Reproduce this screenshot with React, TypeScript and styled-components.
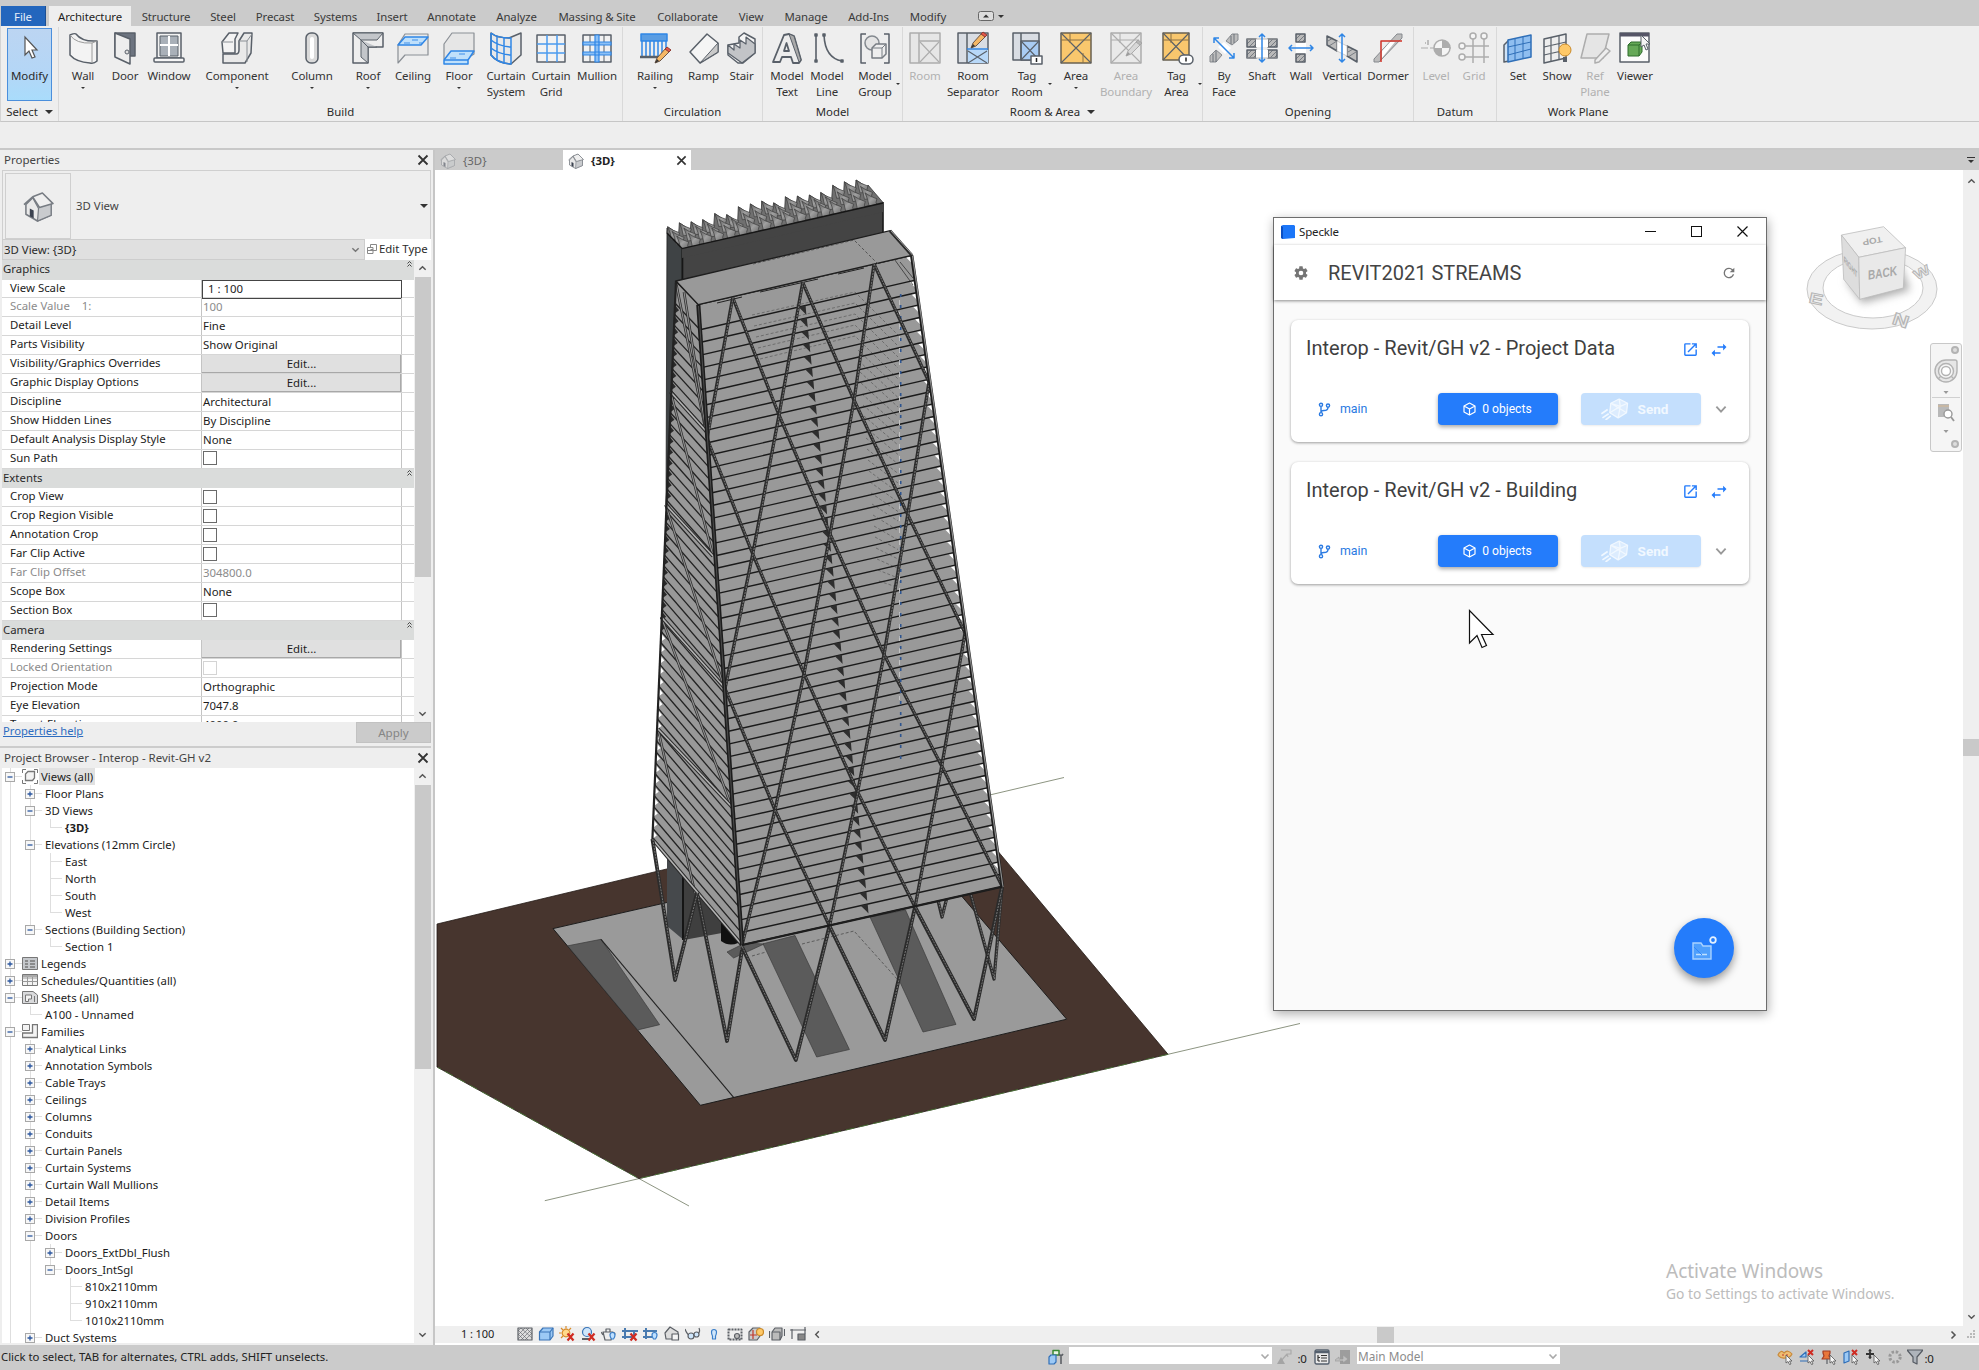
import React from 'react';
import styled, { createGlobalStyle } from 'styled-components';

const UI = '"Noto Sans", "Open Sans", sans-serif';
const G = '#596069';
const B = '#2f86e6';

const GlobalStyle = createGlobalStyle`
  * { box-sizing: border-box; }
  body { margin: 0; background: #fff; }
`;

const Page = styled.div`
  width: 1979px; height: 1370px; overflow: hidden;
  display: flex; flex-direction: column;
  background: #eeeeee; color: #2b2b2b;
  font: 11.4px/16px ${UI}; white-space: nowrap;
`;

/* ---------- ribbon ---------- */
const TabBar = styled.nav`
  height: 26px; flex: none; padding-top: 6px; background: #cbcbcb;
  display: flex; align-items: stretch;
`;
const Tab = styled.div<{ $w: number; $kind?: 'file' | 'active' }>`
  width: ${p => p.$w}px; display: flex; align-items: center; justify-content: center;
  font-size: 11.4px; letter-spacing: -0.1px; padding-top: 2px; color: #3a3a3a;
  ${p => p.$kind === 'file' && 'background:#2366bd;color:#e6effa;margin:0 3px 0 1px;border-right:1px solid #1c4f93;'}
  ${p => p.$kind === 'active' && 'background:#eeeeee;color:#1e1e1e;margin-right:1px;'}
`;
const TabMenu = styled.div`
  display: flex; align-items: center; gap: 4px; margin-left: 21px;
`;
const RibbonBar = styled.div`
  height: 96px; flex: none; display: flex; padding-top: 1px;
  border-bottom: 1px solid #c6c6c6; border-left: 1px solid #d4d4d4;
`;
const Panel = styled.section<{ $w: number; $last?: boolean }>`
  width: ${p => p.$w}px; display: flex; flex-direction: column;
  ${p => !p.$last && 'border-right: 1px solid #d9d9d9;'}
`;
const PanelBody = styled.div`display: flex; height: 76px;`;
const PanelTitle = styled.div`
  height: 18px; display: flex; align-items: center; justify-content: center; gap: 7px;
  font-size: 11.4px;
`;
const Tool = styled.button<{ $ml: number; $dim?: boolean }>`
  width: 36px; margin: 0 0 0 ${p => p.$ml}px; padding: 4px 0 0; border: 0; background: none;
  display: flex; flex-direction: column; align-items: center; flex: none;
  font: 11.5px/16px ${UI}; letter-spacing: -0.1px; color: ${p => (p.$dim ? '#b1b1b1' : '#333')};
  svg.tool { flex: none; margin-bottom: 3px; opacity: ${p => (p.$dim ? 0.45 : 1)}; ${p => p.$dim && 'filter: grayscale(1);'} }
`;
const ToolLabel = styled.span`text-align: center; white-space: pre;`;
const CaretRow = styled.span<{ $side?: boolean }>`
  display: flex; height: 8px; align-items: center;
  ${p => p.$side && 'margin: -20px -42px 0 0; padding-left: 4px;'}
`;
const ModifyButton = styled.button`
  width: 45px; height: 73px; margin: 1px 0 0 6px; padding: 5px 0 0; border: 1px solid #4b8fdc;
  background: linear-gradient(#bcd5f2, #b4d6f6 60%, #a9dcfb);
  display: flex; flex-direction: column; align-items: center; gap: 4px; font: 11.5px/16px ${UI}; color: #2b2b2b;
`;
const OptionsBar = styled.div`height: 28px; flex: none; border-bottom: 2px solid #c8c8c8;`;

const Tri = styled.i<{ $s?: number; $c?: string }>`
  width: 0; height: 0; border: ${p => p.$s ?? 3}px solid transparent; border-bottom: 0;
  border-top-color: ${p => p.$c ?? '#333'}; display: block;
`;

const S = ({ children }: { children: React.ReactNode }) => (
  <svg className="tool" width="34" height="34" viewBox="0 0 34 34" fill="none" stroke={G} strokeWidth="1.5" strokeLinejoin="round">{children}</svg>
);
const pencil = (x: number, y: number) => (
  <g transform={`translate(${x} ${y})`} strokeWidth="1">
    <path d="M0 15 L2 10 L11 0 L15 3 L5 13 Z" fill="#f5b765" stroke="#6a5547" />
    <path d="M10 1 L14 4 L16 2 L12 -1 Z" fill="#e3574a" stroke="#8f3b33" />
    <path d="M0 15 L2 11 L4 13 Z" fill="#333" stroke="none" />
  </g>
);
const cross = (x: number, y: number, w: number, h: number) => (
  <path strokeWidth="1.1" d={`M${x} ${y}L${x + w} ${y + h}M${x + w} ${y}L${x} ${y + h}`} />
);
const hatch = (x: number, y: number) => (
  <g><rect x={x} y={y} width="9" height="8" fill="#b9b9b9" /><path strokeWidth=".7" d={`M${x} ${y + 5}l5-5M${x + 2} ${y + 8}l7-7M${x + 6} ${y + 8}l3-3`} /></g>
);

const ICONS: Record<string, React.ReactNode> = {
  wall: <S><path fill="#f3f3f3" d="M4 4 Q9 2 10 3 Q16 11 31 10 L31 30 Q28 33 24 32 Q10 31 4 24 Z" /><path d="M4 4Q10 13 26 12 L31 10M26 12V32" strokeWidth="1" stroke="#9a9a9a" /></S>,
  door: <S><path fill="#6d7480" d="M7 2H27V25H7Z" /><path fill="#eee" d="M7 2 L22 8 V33 L7 26 Z" /><circle cx="19" cy="21" r="2" fill="#ddd" strokeWidth="1" /></S>,
  window: <S><rect x="5" y="2" width="24" height="25" fill="#f2f2f2" /><rect x="8" y="5" width="18" height="20" fill="#a9b0b8" strokeWidth="1" /><path d="M17 5V25M8 14H26" stroke="#fff" strokeWidth="2" /><rect x="2" y="27" width="30" height="4" rx="1" fill="#f6f6f6" /></S>,
  component: <S><path fill="#f3f3f3" d="M2 11 L9 2 H18 L15 8 V22 H3 Z" /><path fill="#e9e9e9" d="M19 10 L24 2 H32 L31 22 L25 32 H3 V23 H16 Q19 23 19 19 Z" /><path strokeWidth="1" d="M2 11H13M19 10H27L32 3M27 10V31" stroke="#8a8f95" /></S>,
  column: <S><rect x="11" y="2" width="12" height="30" rx="5" fill="#dadada" /><rect x="15" y="6" width="4" height="22" rx="2" fill="#fff" stroke="none" /></S>,
  roof: <S><path fill="#eee" d="M2 2H32V16H17V32H2Z" /><path fill="#c3c6ca" strokeWidth="1" d="M2 2L10 9H26L32 2ZM10 9V26L17 32V16H26" /><path d="M10 9L17 16" strokeWidth="1" /></S>,
  ceiling: <S><path fill="#eaeaea" d="M2 14V32L9 24H32V3H9Z" stroke="#8a8f95" strokeWidth="1.2" /><path fill="#bfe0fb" stroke={B} d="M2 14L9 6H32L25 14Z" /><path stroke={B} strokeWidth="2" opacity=".45" d="M8 12h6M16 9h6M23 12h3" /></S>,
  floor: <S><path fill="#e6e6e6" d="M2 13L10 2H32V23L24 28H2Z" strokeWidth="1.2" stroke="#8a8f95" /><path fill="#bfe0fb" stroke={B} d="M2 29L9 20H32L26 29V33H2Z" /><path stroke={B} d="M2 29H26" /><path stroke={B} strokeWidth="2" opacity=".45" d="M8 27h6M17 23h6" /></S>,
  cs: <S><path fill="#e8e8e8" d="M2 2Q8 7 20 7L32 2V24L22 33Q8 32 2 24Z" /><path stroke={B} d="M2 2V24Q8 32 22 33V7Q8 7 2 2M2 9Q9 15 22 16M2 17Q9 23 22 24M8 6V30M15 7V32" /></S>,
  cg: <S><rect x="3" y="4" width="28" height="27" fill="#f2f2f2" /><path stroke="#4b9bee" d="M13 4V31M23 4V31M3 13H31M3 22H31" /></S>,
  mullion: <S><rect x="3" y="4" width="28" height="27" fill="#f2f2f2" /><path d="M10 4V31M24 4V31" strokeWidth="1" /><path stroke={B} strokeWidth="1.2" fill="#8cc0f5" d="M3 11h28v3H3zM3 21h28v3H3zM15 4h4v27h-4z" /></S>,
  railing: <S><path fill="#5a9de3" stroke={B} d="M3 3H29V10H3Z" /><path stroke={B} d="M4 10V25M8 10V25M12 10V25M16 10V25M20 10V25M24 10V25M28 10V18" /><path d="M2 26H22" strokeWidth="2.5" />{pencil(17, 17)}</S>,
  ramp: <S><path fill="#f5f5f5" d="M3 21L20 3L31 12V21L13 32Z" /><path fill="#c9c9c9" strokeWidth="1" d="M13 32L31 21V12Z" /></S>,
  stair: <S><path fill="#f5f5f5" d="M3 14L14 12V6L19 2L30 8V22L18 32H13L3 24Z" /><path fill="#c2c4c7" d="M3 14L9 19V13L15 17V9L21 13V6L30 13V22L17 32L3 22Z" strokeWidth="1.2" /></S>,
  text: <S><path fill="#ededed" strokeWidth="1.8" d="M3 31L14 4L19 3L24 5L31 29L29 32H23L21 26H12L10 31Z M14 20H19L16.5 12Z" /><path fill="#aaa" d="M19 3L24 5L31 29L29 31Z" strokeWidth="1" /></S>,
  line: <S><path strokeWidth="1.6" d="M6 4V31M14 4Q15 27 32 30" /><path fill={G} d="M5 3h2v2H5zM5 29h2v2H5zM13 3h2v2h-2zM31 29h2v2h-2z" /></S>,
  group: <S><path d="M8 3H3V32H8M26 3H31V32H26" /><circle cx="14" cy="12" r="7" fill="#e4e4e4" stroke="#84898f" /><path fill="#eee" d="M14 17L18 13H28V23L24 27H14Z" stroke="#777c82" /><path d="M14 17H24V27M24 17L28 13" stroke="#777c82" strokeWidth="1" /></S>,
  room: <S><rect x="2" y="2" width="30" height="30" fill="#dadde1" /><path d="M11 2V32M11 10H32" />{cross(12, 11, 19, 20)}</S>,
  sep: <S><rect x="2" y="2" width="30" height="30" fill="#d9dde3" /><rect x="12" y="19" width="20" height="13" fill="#b8d8f8" stroke="none" /><path d="M11 2V32" />{cross(12, 20, 19, 12)}<path stroke={B} d="M11 18H32" />{pencil(15, 2)}</S>,
  tagroom: <S><rect x="3" y="2" width="26" height="27" fill="#d9dde3" /><rect x="11" y="10" width="18" height="19" fill="#a9ccf3" /><path d="M11 2V29" />{cross(11, 10, 18, 19)}<rect x="21" y="25" width="11" height="8" fill="#fff" /><path d="M26.5 27v4" stroke="#222" /></S>,
  area: <S><rect x="2" y="2" width="30" height="30" fill="#f9c76d" stroke="#6a6150" />{cross(2, 2, 30, 30)}<path strokeWidth="1" stroke="#8a7147" d="M11 2V12M2 9H32M24 22V32" /></S>,
  bound: <S><rect x="2" y="2" width="30" height="30" fill="#e3e3e3" />{cross(2, 2, 30, 30)}<path d="M2 9H30M11 2V12" strokeWidth="1" />{pencil(17, 10)}</S>,
  tagarea: <S><rect x="3" y="2" width="26" height="27" fill="#f9c76d" stroke="#6a6150" />{cross(3, 2, 26, 27)}<path strokeWidth="1" stroke="#8a7147" d="M11 2V12M3 9H29" /><rect x="19" y="24" width="14" height="9" rx="4.5" fill="#fff" /><path d="M26 26.5v4" stroke="#222" /></S>,
  byface: <S><path fill="#bdbdbd" d="M19 10L25 3H31V9L25 14ZM3 31V25L9 19L15 24L9 31Z" strokeWidth="1" stroke="#85898e" /><path strokeWidth=".8" d="M24 5v8M27 3v9M6 23v8M9 20v11" /><path fill="#fff" stroke="none" d="M11 16L17 11L24 17L18 23Z" /><path stroke={B} d="M7 7L27 27M7 12V7H12M22 27H27V22" /></S>,
  shaft: <S>{hatch(2, 8)}{hatch(23, 8)}{hatch(2, 19)}{hatch(23, 19)}<path fill="#fff" stroke="none" d="M11 8h12v8H11zM11 19h12v8H11z" /><path stroke="#aaa" strokeWidth=".8" d="M2 8H32M2 27H32" /><path stroke={B} d="M17 3V31M14 6L17 3L20 6M14 28L17 31L20 28" /></S>,
  wallo: <S>{hatch(12, 3)}{hatch(12, 23)}<path fill="#fff" stroke="none" d="M12 12h10v10H12z" /><path stroke={B} d="M5 17H29M8 14L5 17L8 20M26 14L29 17L26 20" /></S>,
  vertical: <S><path fill="#bdbdbd" d="M2 5L12 10V20L2 14ZM22 15L32 20V31L22 25Z" /><path strokeWidth=".7" d="M3 10l5-3M4 15l8-5M23 21l5-3M23 26l8-5" /><path fill="#fff" stroke="#bbb" strokeWidth=".7" d="M12 10L22 15V25L12 20Z" /><path stroke={B} d="M17 3V31M14 6L17 3L20 6M14 28L17 31L20 28" /></S>,
  dormer: <S><path fill="#bdbdbd" d="M3 31V28L26 3H31V7L8 31Z" strokeWidth="1" stroke="#85898e" /><path fill="#fff" stroke="none" d="M11 20V27L24 11H19Z" /><path stroke="#cf3328" d="M10 31V10H31" /></S>,
  level: <S><path d="M2 17H32" strokeDasharray="7 2" strokeWidth="1.2" /><circle cx="23" cy="17" r="8" fill="#fff" /><path d="M23 17V9A8 8 0 0 1 31 17ZM23 17V25A8 8 0 0 1 15 17Z" fill={G} stroke="none" /><path d="M9 9v5M6 12h1" /></S>,
  grid: <S><circle cx="16" cy="5" r="3" fill="#fff" /><circle cx="27" cy="5" r="3" fill="#fff" /><circle cx="5" cy="15" r="3" fill="#fff" /><circle cx="5" cy="26" r="3" fill="#fff" /><path d="M16 8V32M27 8V32M8 15H32M8 26H32" /></S>,
  set: <S><path fill="#cfe3f7" d="M3 14L8 9V30L3 31Z" /><path fill="#8fbef0" stroke="#2f6fb8" d="M7 9L30 4V26L7 31Z" /><path stroke="#2f6fb8" strokeWidth="1" d="M14 8V29M22 6V27M7 16L30 11M7 24L30 18" /></S>,
  show: <S><path fill="#eee" d="M4 8L26 3V27L4 32Z" /><path d="M11 6V30M19 5V29M4 16L26 11M4 24L26 19" strokeWidth="1.2" /><circle cx="25" cy="19" r="6" fill="#ffc968" stroke="#c98a2a" strokeWidth="1" /><path d="M25 26v5" strokeWidth="4" /></S>,
  ref: <S><path fill="#dcdcdc" d="M9 3H31L25 27H3Z" /><path fill="#eee" d="M17 29L28 17L32 20L21 31L17 32Z" /></S>,
  viewer: <S><rect x="2" y="2" width="29" height="29" fill="#fbfbfb" /><path fill="#556" stroke="none" d="M2 2H31V5.500H2Z" /><path fill="#65a857" stroke="#2f6d2c" strokeWidth="1" d="M10 14L13 11H24V21L21 25H10Z" /><path stroke="#2f6d2c" strokeWidth="1" d="M10 14H21V25M21 14L24 11" /><path fill="#f4f4f4" strokeWidth="1" d="M23 4V16L26 14L28 19L30 18L28 13H32Z" /></S>,
};

type ToolDef = [label: string, icon: string, center: number, caret?: 'below' | 'side', dim?: boolean];
const PANELS: { title: string; start: number; end: number; menu?: boolean; tools: ToolDef[] }[] = [
  { title: 'Build', start: 59, end: 623, tools: [
    ['Wall', 'wall', 83, 'below'], ['Door', 'door', 125], ['Window', 'window', 169], ['Component', 'component', 237, 'below'],
    ['Column', 'column', 312, 'below'], ['Roof', 'roof', 368, 'below'], ['Ceiling', 'ceiling', 413], ['Floor', 'floor', 459, 'below'],
    ['Curtain\nSystem', 'cs', 506], ['Curtain\nGrid', 'cg', 551], ['Mullion', 'mullion', 597]] },
  { title: 'Circulation', start: 623, end: 763, tools: [['Railing', 'railing', 655, 'below'], ['Ramp', 'ramp', 703.5], ['Stair', 'stair', 741.5]] },
  { title: 'Model', start: 763, end: 903, tools: [['Model\nText', 'text', 787], ['Model\nLine', 'line', 827], ['Model\nGroup', 'group', 875, 'side']] },
  { title: 'Room & Area', start: 903, end: 1203, menu: true, tools: [
    ['Room', 'room', 925, undefined, true], ['Room\nSeparator', 'sep', 973], ['Tag\nRoom', 'tagroom', 1027, 'side'], ['Area', 'area', 1076, 'below'],
    ['Area\nBoundary', 'bound', 1126, undefined, true], ['Tag\nArea', 'tagarea', 1176.5, 'side']] },
  { title: 'Opening', start: 1203, end: 1414, tools: [['By\nFace', 'byface', 1224], ['Shaft', 'shaft', 1262], ['Wall', 'wallo', 1301], ['Vertical', 'vertical', 1342], ['Dormer', 'dormer', 1388]] },
  { title: 'Datum', start: 1414, end: 1497, tools: [['Level', 'level', 1436, undefined, true], ['Grid', 'grid', 1474, undefined, true]] },
  { title: 'Work Plane', start: 1497, end: 1659, tools: [['Set', 'set', 1518], ['Show', 'show', 1557], ['Ref\nPlane', 'ref', 1595, undefined, true], ['Viewer', 'viewer', 1635]] },
];

const TABS: [string, number][] = [['Structure', 68], ['Steel', 46], ['Precast', 58], ['Systems', 63], ['Insert', 50], ['Annotate', 69], ['Analyze', 61],
  ['Massing & Site', 100], ['Collaborate', 81], ['View', 46], ['Manage', 64], ['Add-Ins', 61], ['Modify', 58]];

function Ribbon() {
  return (
    <>
      <TabBar>
        <Tab $w={45} $kind="file">File</Tab>
        <Tab $w={82} $kind="active">Architecture</Tab>
        {TABS.map(([t, w]) => <Tab key={t} $w={w}>{t}</Tab>)}
        <TabMenu>
          <svg width="16" height="10" viewBox="0 0 16 10"><rect x=".5" y=".5" width="15" height="9" rx="2" fill="#ddd" stroke="#666" /><path d="M5 6.500L8 3.500L11 6.500Z" fill="#333" /></svg>
          <Tri $s={3} />
        </TabMenu>
      </TabBar>
      <RibbonBar>
        <Panel $w={58}>
          <PanelBody>
            <ModifyButton>
              <svg width="20" height="30" viewBox="0 0 20 30"><path d="M5 3V21L9 17L12 24L15 23L12 16H17Z" fill="#fff" stroke="#555" strokeWidth="1.2" /></svg>
              Modify
            </ModifyButton>
          </PanelBody>
          <PanelTitle>Select <Tri $s={4} /></PanelTitle>
        </Panel>
        {PANELS.map((p, n) => {
          let edge = p.start;
          return (
            <Panel key={p.title} $w={p.end - p.start} $last={n === PANELS.length - 1}>
              <PanelBody>
                {p.tools.map(([label, icon, c, caret, dim]) => {
                  const ml = c - 18 - edge;
                  edge = c + 18;
                  return (
                    <Tool key={label} $ml={ml} $dim={dim}>
                      {ICONS[icon]}
                      <ToolLabel>{label}</ToolLabel>
                      {caret && <CaretRow $side={caret === 'side'}><Tri $s={2.5} /></CaretRow>}
                    </Tool>
                  );
                })}
              </PanelBody>
              <PanelTitle>{p.title}{p.menu && <Tri $s={4} />}</PanelTitle>
            </Panel>
          );
        })}
      </RibbonBar>
      <OptionsBar />
    </>
  );
}

/* ---------- left column ---------- */
const Main = styled.div`display: flex; height: 1195px; flex: none;`;
const Left = styled.aside`
  width: 435px; flex: none; display: flex; flex-direction: column; background: #eeeeee;
  border-right: 2px solid #c6c6c6; padding-right: 2px;
`;
const PaletteTitle = styled.div`
  height: 20px; flex: none; display: flex; align-items: center; justify-content: space-between;
  padding: 0 2px 0 4px; color: #444; font-size: 11.5px;
`;
const TypeBox = styled.div`
  height: 69px; flex: none; margin: 0 0 0 2px; padding: 2px 2px 0 2px; border: 1px solid #cfcfcf; border-bottom: 0;
  display: flex; align-items: center; gap: 5px; color: #444;
`;
const TypeThumb = styled.div`
  width: 66px; height: 66px; border: 1px solid #cfcfcf; display: flex; align-items: center; justify-content: center;
`;
const Push = styled.span`margin-left: auto;`;
const InstanceRow = styled.div`height: 21px; flex: none; display: flex; margin-left: 2px; background: #fff; color: #2b2b2b;`;
const Combo = styled.div`
  width: 363px; background: #e0e0e0; border: 1px solid #cdcdcd; display: flex; align-items: center;
  justify-content: space-between; padding: 0 4px 0 1px;
`;
const EditType = styled.div`display: flex; align-items: center; gap: 2px; padding: 0 0 2px 2px;`;
const ScrollPane = styled.div<{ $h: number }>`height: ${p => p.$h}px; flex: none; display: flex; margin-left: 2px; background: #fff; overflow: hidden;`;
const Sheet = styled.div`width: 412px; height: 100%; overflow: hidden; background: #fff;`;
const Group = styled.div`
  height: 19.5px; background: #dadcdb; display: flex; justify-content: space-between; align-items: flex-start; padding: 1px 2px 0 1px;
`;
const PropRow = styled.div<{ $dim?: boolean }>`
  height: 18.95px; display: flex; border-bottom: 1px solid #d6d6d6; color: ${p => (p.$dim ? '#8b8b8b' : '#1c1c1c')};
`;
const PropName = styled.div`width: 200px; padding-left: 8px; border-right: 1px solid #c4c4c4; white-space: pre; flex: none;`;
const PropValue = styled.div<{ $boxed?: boolean }>`
  width: 200px; flex: none; padding-left: 1px; border-right: 1px solid #c4c4c4; display: flex; align-items: center;
  ${p => p.$boxed && 'border:1px solid #444;padding-left:5px;height:19px;'}
`;
const EditButton = styled.button`
  flex: 1; height: 18px; margin-left: -1px; padding: 0; border: 0; border-right: 1px solid #aaa; border-bottom: 1px solid #a8a8a8;
  background: #e0e0e0; font: 11.4px/16px ${UI}; color: #1c1c1c; text-align: center; text-indent: 1px;
`;
const Check = styled.span<{ $dim?: boolean }>`
  width: 14px; height: 14px; border: 1px solid ${p => (p.$dim ? '#d4d4d4' : '#6a6a6a')}; background: #fff; margin-top: -1px;
`;
const ScrollTrack = styled.div`
  width: 17px; flex: none; background: #f0f0f0; display: flex; flex-direction: column; align-items: center;
  justify-content: space-between;
`;
const ThumbRun = styled.div<{ $h: number }>`
  width: 16px; flex: none; display: flex; flex-direction: column; align-items: center;
  &::after { content: ''; width: 16px; height: ${p => p.$h}px; background: #c9c9c9; }
`;
const ArrowCell = styled.span`height: 17px; display: flex; align-items: center;`;
const Footer = styled.div`
  height: 26px; flex: none; display: flex; justify-content: space-between; align-items: flex-start; padding: 0 0 0 3px;
  border-bottom: 2px solid #cccccc;
`;
const HelpLink = styled.a`color: #2d6cc0; text-decoration: underline; padding-top: 1px; font-size: 11.200px;`;
const ApplyButton = styled.button`
  width: 75px; height: 21px; border: 1px solid #c2c2c2; background: #cbcbcb; color: #858585; font: 11.6px/16px ${UI};
`;

const Chev = ({ d = 'down', s = 9, c = '#555' }: { d?: 'up' | 'down' | 'left' | 'right'; s?: number; c?: string }) => {
  const r = { down: 0, up: 180, left: 90, right: 270 }[d];
  return <svg width={s} height={s} viewBox="0 0 10 10"><path transform={`rotate(${r} 5 5)`} d="M1.500 3.500L5 7L8.500 3.500" fill="none" stroke={c} strokeWidth="1.6" /></svg>;
};
const CloseX = ({ s = 12 }: { s?: number }) => (
  <svg width={s} height={s} viewBox="0 0 12 12"><path d="M1.500 1.500L10.500 10.500M10.500 1.500L1.500 10.500" stroke="#333" strokeWidth="1.8" /></svg>
);
const House = ({ s, dim }: { s: number; dim?: boolean }) => (
  <svg width={s} height={s} viewBox="0 0 32 32" opacity={dim ? 0.5 : 1}>
    <path d="M3 14V24L15 31L29 25V14L20 3L10 7Z" fill="#e9e9e9" stroke="#777c83" strokeWidth="1.6" strokeLinejoin="round" />
    <path d="M10 7L16 18L15 31L29 25V14L20 3Z" fill="#c9cbce" stroke="#777c83" strokeWidth="1.2" />
    <path d="M1 14L10 6L17 17L31 13L20 2L10 6" fill="#efefef" stroke="#777c83" strokeWidth="1.6" strokeLinejoin="round" />
    <path d="M7 18L11 20V28L7 26Z" fill="#3b4250" />
  </svg>
);

type Prop = [string, string, ('edit' | 'check' | 'dimcheck' | 'dim' | 'boxed')?];
const GROUPS: [string, Prop[]][] = [
  ['Graphics', [['View Scale', '1 : 100', 'boxed'], ['Scale Value    1:', '100', 'dim'], ['Detail Level', 'Fine'], ['Parts Visibility', 'Show Original'],
    ['Visibility/Graphics Overrides', '', 'edit'], ['Graphic Display Options', '', 'edit'], ['Discipline', 'Architectural'], ['Show Hidden Lines', 'By Discipline'],
    ['Default Analysis Display Style', 'None'], ['Sun Path', '', 'check']]],
  ['Extents', [['Crop View', '', 'check'], ['Crop Region Visible', '', 'check'], ['Annotation Crop', '', 'check'], ['Far Clip Active', '', 'check'],
    ['Far Clip Offset', '304800.0', 'dim'], ['Scope Box', 'None'], ['Section Box', '', 'check']]],
  ['Camera', [['Rendering Settings', '', 'edit'], ['Locked Orientation', '', 'dimcheck'], ['Projection Mode', 'Orthographic'], ['Eye Elevation', '7047.8'], ['Target Elevation', '4000.0']]],
];

function Properties() {
  return (
    <>
      <PaletteTitle>Properties <CloseX /></PaletteTitle>
      <TypeBox>
        <TypeThumb><House s={31} /></TypeThumb>3D View<Push><Tri $s={4} /></Push>
      </TypeBox>
      <InstanceRow>
        <Combo>3D View: {'{3D}'}<Chev c="#777" /></Combo>
        <EditType>
          <svg width="10" height="10" viewBox="0 0 10 10" fill="#fff" stroke="#888"><path d="M3.500 .5H9.500V5.500H3.500Z" /><path d="M.5 3.500H6V9.500H.5ZM.5 6.500H9.500V3" /></svg>
          Edit Type
        </EditType>
      </InstanceRow>
      <ScrollPane $h={462}>
        <Sheet>
          {GROUPS.map(([name, rows]) => (
            <React.Fragment key={name}>
              <Group>{name}<svg width="5" height="7" viewBox="0 0 5 7"><path d="M.5 2.500L2.500 .5L4.500 2.500M.5 5.500L2.500 3.500L4.500 5.500" fill="none" stroke="#333" strokeWidth=".9" /></svg></Group>
              {rows.map(([k, v, t]) => (
                <PropRow key={k} $dim={t === 'dim' || t === 'dimcheck'}>
                  <PropName>{k}</PropName>
                  <PropValue $boxed={t === 'boxed'}>
                    {t === 'edit' ? <EditButton>Edit...</EditButton> : t === 'check' || t === 'dimcheck' ? <Check $dim={t === 'dimcheck'} /> : v}
                  </PropValue>
                </PropRow>
              ))}
            </React.Fragment>
          ))}
        </Sheet>
        <ScrollTrack>
          <ThumbRun $h={300}><ArrowCell><Chev d="up" /></ArrowCell></ThumbRun>
          <ArrowCell><Chev /></ArrowCell>
        </ScrollTrack>
      </ScrollPane>
      <Footer><HelpLink>Properties help</HelpLink><ApplyButton>Apply</ApplyButton></Footer>
    </>
  );
}

const LINE = '#dedede';
const TreeRow = styled.div`height: 17px; display: flex; align-items: center; margin-left: -2px; color: #1c1c1c;`;
const Cell = styled.span<{ $k: string; $last: boolean }>`
  width: ${p => (p.$last ? 22 : 20)}px; height: 17px; flex: none; display: flex; align-items: center; padding-left: 5px;
  background:
    linear-gradient(${LINE}, ${LINE}) 10px 0 / 1px ${p => ('e='.includes(p.$k) ? '9px' : p.$k === '.' ? '0' : '100%')} no-repeat,
    linear-gradient(${LINE}, ${LINE}) 10px 8px / ${p => ('.v'.includes(p.$k) ? '0' : '13px')} 1px no-repeat;
`;
const TreeText = styled.span<{ $bold?: boolean; $sel?: boolean }>`
  padding: 0 2px 0 2px; margin-left: 1px; line-height: 17px; font-size: 11.350px;
  ${p => p.$bold && 'font-weight:700;'} ${p => p.$sel && 'background:#e1e1e1;'}
`;
const Expander = ({ plus }: { plus: boolean }) => (
  <svg width="10" height="10" viewBox="0 0 10 10"><rect x=".5" y=".5" width="9" height="9" fill="#f7f7f7" stroke="#a8a8a8" /><path d={plus ? 'M2.500 5H7.500M5 2.500V7.500' : 'M2.500 5H7.500'} stroke="#2b579f" strokeWidth="1.3" /></svg>
);
const TI = ({ children }: { children: React.ReactNode }) => <svg width="16" height="16" viewBox="0 0 16 16" fill="#f3f3f3" stroke="#777">{children}</svg>;
const TREE_ICONS: Record<string, React.ReactNode> = {
  views: <TI><path fill="none" d="M.5 4V.5H4M12 .5H15.500V4M.5 11V14.500H4M12 14.500H15.500V11" /><path d="M3.500 5L6 2.500H12.500V9L10.500 11.500H3.500Z" strokeWidth="1.3" /></TI>,
  legends: <TI><path d="M.5 1.500H15.500V13.500H.5Z" fill="#c5c8cc" /><path d="M3 5h3M8 5h5M3 8h3M8 8h5M3 11h3M8 11h5" strokeWidth="1.6" /></TI>,
  schedules: <TI><path d="M.5 1.500H15.500V12.500H.5Z" /><path d="M.5 5H15.500M.5 8.500H15.500M5.500 3V12M10.500 3V12" stroke="#999" /><path d="M1 3H15" strokeWidth="2" stroke="#aaa" /></TI>,
  sheets: <TI><path d="M.5 1.500H11L15.500 5V13.500H.5Z" fill="#d9dadc" /><path d="M3.500 5H9.500V9H6.500V11.500H3.500ZM12.500 6V12" /></TI>,
  families: <TI><path d="M.5 .5H7.500V6.500H.5Z" /><path d="M10.500 .5H15.500V13.500H.5V9H10.500Z" strokeWidth="1.3" /></TI>,
};
const TREE: [string, string, string?][] = [
  ['-', 'Views (all)', 'views'], ['v+', 'Floor Plans'], ['v-', '3D Views'], ['vve', '{3D}'], ['v-', 'Elevations (12mm Circle)'], ['vvt', 'East'], ['vvt', 'North'],
  ['vvt', 'South'], ['vve', 'West'], ['v=', 'Sections (Building Section)'], ['v.e', 'Section 1'], ['+', 'Legends', 'legends'], ['+', 'Schedules/Quantities (all)', 'schedules'],
  ['-', 'Sheets (all)', 'sheets'], ['ve', 'A100 - Unnamed'], ['-', 'Families', 'families'],
  ...['Analytical Links', 'Annotation Symbols', 'Cable Trays', 'Ceilings', 'Columns', 'Conduits', 'Curtain Panels', 'Curtain Systems', 'Curtain Wall Mullions', 'Detail Items', 'Division Profiles'].map(t => ['v+', t] as [string, string]),
  ['v-', 'Doors'], ['vv+', 'Doors_ExtDbl_Flush'], ['vv=', 'Doors_IntSgl'], ['vv.t', '810x2110mm'], ['vv.t', '910x2110mm'], ['vv.e', '1010x2110mm'], ['v+', 'Duct Systems'],
];

function Browser() {
  return (
    <>
      <PaletteTitle>Project Browser - Interop - Revit-GH v2 <CloseX /></PaletteTitle>
      <ScrollPane $h={575}>
        <Sheet>
          {TREE.map(([cells, text, icon]) => (
            <TreeRow key={text}>
              {[...cells].map((k, i) => (
                <Cell key={i} $k={k} $last={i === cells.length - 1}>{'+-='.includes(k) && <Expander plus={k === '+'} />}</Cell>
              ))}
              {icon && TREE_ICONS[icon]}
              <TreeText $bold={text === '{3D}'} $sel={text === 'Views (all)'}>{text}</TreeText>
            </TreeRow>
          ))}
        </Sheet>
        <ScrollTrack>
          <ThumbRun $h={284}><ArrowCell><Chev d="up" /></ArrowCell></ThumbRun>
          <ArrowCell><Chev /></ArrowCell>
        </ScrollTrack>
      </ScrollPane>
    </>
  );
}

/* ---------- drawing area ---------- */
const ViewColumn = styled.main`flex: 1; min-width: 0; display: flex; flex-direction: column; background: #fff;`;
const ViewTabs = styled.div`
  height: 20px; flex: none; background: #cbcbcb; display: flex; align-items: stretch; color: #666;
`;
const ViewTab = styled.div<{ $active?: boolean }>`
  width: 128px; display: flex; align-items: center; gap: 7px; padding: 1px 4px 0 5px;
  ${p => p.$active && 'background:#fff;color:#222;font-weight:700;'}
  svg:last-child { margin-left: auto; }
`;
const TabsMenu = styled.div`margin: 7px 4px 0 auto; display: flex; flex-direction: column; align-items: center; gap: 2px; &::before { content: ''; width: 8px; height: 1px; background: #333; }`;
const CanvasRow = styled.div`height: 1156px; flex: none; display: flex;`;
const Canvas = styled.div`width: 1528px; height: 1156px; position: relative; overflow: hidden; background: #fff;`;
const VScroll = styled.div`
  width: 16px; flex: none; background: #efefef; display: flex; flex-direction: column; align-items: center; justify-content: space-between; padding: 7px 0 5px;
`;
const VThumb = styled.div`width: 16px; height: 17px; background: #c9c9c9; margin-bottom: 3px;`;
const ControlBar = styled.div`
  height: 17px; flex: none; background: #efefef; display: flex; align-items: center; padding-left: 26px; color: #222;
`;
const Scale = styled.span`width: 56px; font-size: 11px; letter-spacing: -.1px; padding-bottom: 1px;`;
const CtlIcons = styled.div`display: flex; gap: 5px; margin-right: 7px; padding-bottom: 1px;`;
const HThumb = styled.div`width: 17px; height: 16px; background: #c9c9c9; margin-left: 555px;`;
const Grip = styled.div`
  width: 9px; height: 9px; margin: 0 3px 0 auto;
  background: conic-gradient(#b9b9b9 0 0) 0 6px/2px 2px no-repeat, conic-gradient(#b9b9b9 0 0) 3px 6px/2px 2px no-repeat,
    conic-gradient(#b9b9b9 0 0) 6px 6px/2px 2px no-repeat, conic-gradient(#b9b9b9 0 0) 3px 3px/2px 2px no-repeat,
    conic-gradient(#b9b9b9 0 0) 6px 3px/2px 2px no-repeat, conic-gradient(#b9b9b9 0 0) 6px 0/2px 2px no-repeat;
`;
const HArrow = styled.span`margin-left: 554px; display: flex;`;

const Drawing = styled.svg`display: block;`;

type P = [number, number];
const pts = (a: P[]) => a.map(p => p.join(',')).join(' ');
const lerp = (a: number, b: number, t: number) => a + (b - a) * t;
const FLOORS = Array.from({ length: 52 }, (_, i) => {
  const t = i / 51;
  const l: P = [lerp(698.3, 742, t), lerp(304.6, 945, t)];
  const r: P = [lerp(911.7, 1002.4, t), lerp(255.4, 886.6, t)];
  const b: P = [lerp(676, 652.4, t), lerp(281.4, 839.4, t)];
  const mx = lerp(803, 869, t);
  const m: P = [mx, l[1] + ((mx - l[0]) * (r[1] - l[1])) / (r[0] - l[0])];
  return { i, l, r, b, m };
}).filter(f => f.i !== 1);

const BRACES: P[][] = [
  [[732.7, 297.5], [779, 415], [830, 534], [884, 654.6], [941.7, 766], [1002, 886]],
  [[802.7, 282.5], [854, 400], [907.7, 514.6], [965, 633]],
  [[874, 264], [929, 382]],
  [[707, 438.6], [752.7, 554], [804, 673.6], [857.6, 792], [915, 907]],
  [[725, 688.6], [775, 810], [829.5, 926]],
  [[732.7, 297.5], [707, 438.6]],
  [[802.7, 282.5], [779, 415], [752.7, 554], [725, 688.6]],
  [[874, 264], [854, 400], [830, 534], [804, 673.6], [775, 810], [742, 945]],
  [[929, 382], [907.7, 514.6], [884, 654.6], [857.6, 792], [829.5, 926]],
  [[965, 633], [941.7, 766], [915, 907]],
];
const LEGS: P[][] = [
  [[697, 893], [727, 1041], [742, 950]], [[742, 947], [795.8, 1060], [829.5, 926]], [[829.5, 926], [885, 1040], [915, 907]],
  [[915, 907], [974, 1019], [1002, 887]], [[652.4, 839], [675, 980], [697, 893]],
];
const BACK_LEGS: P[][] = [[[970, 892], [994, 979], [1002, 887]], [[937.6, 899], [942, 917], [947, 897]]];
const SIDE: P[][] = [
  [[676, 283], [707, 437]], [[670.7, 392], [713, 556]], [[665.7, 505], [724, 687]], [[661.3, 617], [732, 808]], [[658, 729], [695, 893]],
  [[684, 292], [690, 330], [705, 425]],
];
const RINGS: P[][] = [[[670.7, 392], [706, 431]], [[665.7, 504.6], [713, 556]], [[661.3, 617], [724, 687]], [[658, 729], [732, 807]], [[652.4, 839], [742, 945]]];
const FINS: P[] = ([[143, 187], [178, 176], [213, 173], [248, 167], [284, 150], [320, 153], [355, 131], [391, 123], [425, 115], [461, 120], [496, 103], [532, 101], [568, 98], [602, 91], [638, 71], [673, 61], [708, 56]] as P[])
  .map(([x, y]) => [620 + x / 3, 160 + y / 2.8]);

const tube = (a: P[], i: number, w = 3.3) => (
  <g key={i} fill="none" strokeLinejoin="round">
    <polyline points={pts(a)} stroke="#2b2b2b" strokeWidth={w} />
    <polyline points={pts(a)} stroke="#757575" strokeWidth="1" strokeDasharray="2 1" transform="translate(.4 0)" />
  </g>
);

function Tower() {
  return (
    <Drawing width="1528" height="1156" viewBox="435 170 1528 1156">
      <defs>
        <linearGradient id="fin" x1="0" x2="1" y1="0" y2="1"><stop offset="0" stopColor="#5c5c5c" /><stop offset=".5" stopColor="#a0a0a0" /><stop offset="1" stopColor="#6a6a6a" /></linearGradient>
      </defs>
      <g stroke="#8d9582" strokeWidth="1" fill="none">
        <path d="M991 794.700L1064 777.500M1168 1054.300L1300 1023.500M639 1178.600L544.800 1200.700M639 1178.600L689 1206" />
      </g>
      <polygon points="437,924 955,800 1168,1054.300 639,1178.600 437,1067" fill="#47352e" stroke="#231a16" strokeWidth=".8" />
      <path d="M1168 1054.300L639 1178.600L438 1067.400" fill="none" stroke="#4d7f37" strokeWidth=".8" strokeDasharray="9 5" />
      <polygon points="553,928.600 918,845 1066.700,1019.200 700.400,1105.300" fill="#9a9a9a" stroke="#1d1d1d" strokeWidth="1" />
      <g fill="#5b5b5b" stroke="#3c3c3c" strokeWidth=".7">
        <polygon points="567.800,945.800 601,939.300 659.600,1024.700 637.700,1029.900" />
        <polygon points="763,943.800 795,935.500 849.400,1049.500 816.700,1057" />
        <polygon points="870,917 905.500,910 956,1024.400 923,1032" />
        <polygon points="727,952 733.600,958 764,944 745,943" />
      </g>
      <path d="M601 939.300L733.600 1097.400" stroke="#222" strokeWidth="1.1" />
      <path d="M752 956L766 952M802 944L854 931L898 980" stroke="#555" strokeWidth=".9" strokeDasharray="3 2" fill="none" />
      <polygon points="667,850 683,866 683.600,940 667,926" fill="#46494c" />
      <polygon points="683,866 735,900 727.400,932 683.600,940" fill="#3f3f3f" />
      <path d="M683 866V940" stroke="#151515" strokeWidth="2" />
      <path d="M721 915V941Q729 947 738 943V925Z" fill="#111" />
      {BACK_LEGS.map((a, i) => tube(a, i, 3.2))}

      {/* service core behind the roof, with its row of curved fins */}
      <polygon points="667,228 682,248.600 682,282 676,284 666,505" fill="#3f4345" stroke="#222" strokeWidth=".8" />
      <polygon points="682,248.600 882.700,203 883,234 682,282" fill="#444444" />
      <path d="M682.500 248V282M883 202V234" stroke="#161616" strokeWidth="1.6" />
      <polygon points={pts([...FINS.flatMap(([x, y]) => [[x, y] as P, [x + 11, y + 7] as P]), [868, 185], [883, 202.500], [682, 248.600], [667, 233]])} fill="#707070" stroke="#333" strokeWidth=".8" />
      {[0, 1, 2].map(r => FINS.map(([x, y], i) => {
        const bx = x + r * 4.5;
        const by = lerp(y, 236 - i * 2.7, r / 2);
        return <path key={`${r}-${i}`} d={`M${bx} ${by}Q${bx + 5} ${by + 4} ${bx + 12} ${by + 6}Q${bx + 10} ${by + 10} ${bx + 12} ${by + 12}L${bx + 4} ${by + 13}Q${bx + 3} ${by + 6} ${bx} ${by}Z`} fill="url(#fin)" stroke="#3d3d3d" strokeWidth=".7" />;
      }))}
      <polygon points="682,248.600 883,203 883,212 682,258" fill="#444444" />
      <path d="M667 233L682 248.600L883 203" fill="none" stroke="#161616" strokeWidth="1.4" />

      {/* side elevation */}
      <polygon points="676,281 698.300,304.600 742,945 652.400,839.400" fill="#989898" />
      {FLOORS.map(({ i, l, b }) => (
        <g key={i}>
          <path d={`M${b[0]} ${b[1]}L${l[0]} ${l[1]}`} stroke="#222" strokeWidth="1.3" />
          {i > 1 && i < 51 && <path d={`M${b[0]} ${b[1] + 2}v8l4 -3Z`} fill={i > 31 ? '#fff' : '#2a2a2a'} />}
        </g>
      ))}
      {SIDE.map((a, i) => <g key={i} fill="none"><polyline points={pts(a)} stroke="#2c2c2c" strokeWidth="2.6" /><polyline points={pts(a)} stroke="#919191" strokeWidth="1.1" /></g>)}
      {RINGS.map((a, i) => <g key={i} fill="none"><polyline points={pts(a)} stroke="#2a2a2a" strokeWidth="3.6" /><polyline points={pts(a)} stroke="#b4b4b4" strokeWidth="1.6" /></g>)}
      <path d="M676 281L652.400 839.400" stroke="#222" strokeWidth="2.200" />

      {/* front elevation */}
      <polygon points="698.300,304.600 911.700,255.400 1002.400,886.600 742,945" fill="#999999" />
      {FLOORS.map(({ i, r }) => i < 51 && <polygon key={i} points={pts([[r[0] - 5.5, r[1] + 2], [r[0] + 1, r[1] + 1], [r[0] + 1.5, r[1] + 9]])} fill="#fff" />)}
      <path d="M892 256L913 285M900 262L913 278" stroke="#333" strokeWidth=".8" />
      <g stroke="#5a5a5a" strokeWidth=".7" strokeDasharray="3 2" fill="none">
        {[0, 1, 2, 3, 4].map(k => <path key={k} d={`M${752 + k * 2} ${315 + k * 11}L855 ${292 + k * 11}L898 ${335 + k * 11}`} />)}
        {Array.from({ length: 22 }, (_, k) => <path key={k} d={`M${858 + k} ${350 + k * 11}L898 ${388 + k * 9.5}`} />)}
      </g>
      {FLOORS.map(({ i, l, r, m }) => (
        <g key={i}>
          <path d={`M${l[0]} ${l[1]}L${r[0]} ${r[1]}`} stroke="#1a1a1a" strokeWidth="1.4" />
          {i > 1 && i < 51 && <polygon points={pts([[m[0] - 7, m[1] + 1.6], [m[0], m[1]], [m[0] + 0.8, m[1] + 9.5], [m[0] - 1.5, m[1] + 7]])} fill="#2e2e2e" />}
        </g>
      ))}
      <path d="M899.500 300V700" stroke="#c2c2c2" strokeWidth="1" strokeDasharray="5 7" />
      <path d="M900.700 294V762" stroke="#2d548f" strokeWidth="1.600" strokeDasharray="3 8" />
      <polygon points="676,281 890,230.700 911.700,255.400 698.300,304.600" fill="#999999" stroke="#1e1e1e" strokeWidth="1.3" />
      <path d="M753 264L854 240L878 264" stroke="#444" strokeWidth=".8" strokeDasharray="3 2" fill="none" />
      <path d="M717 303L742 297M760 292L818 279M838 274L864 268" stroke="#222" strokeWidth="1" />
      {BRACES.map((a, i) => tube(a, i))}
      {LEGS.map((a, i) => tube(a, i, 3.8))}
      <path d="M698.300 304.600L742 945" stroke="#1d1d1d" strokeWidth="4.200" />
      <path d="M698.500 306L742 945" stroke="#5b5b5b" strokeWidth=".8" />
      <path d="M911.700 255.400L1002.400 886.600" stroke="#1d1d1d" strokeWidth="3.400" />
      <path d="M912.500 256L1003 887" stroke="#8e8e8e" strokeWidth="1.2" />
      <path d="M890 230.700L912 255.400" stroke="#2a2a2a" strokeWidth="3" /><path d="M891 231L912.500 255" stroke="#999" strokeWidth="1" />
      <path d="M742 945L1002.400 886.600" stroke="#1d1d1d" strokeWidth="2.200" />
    </Drawing>
  );
}

const CubeBox = styled.div`position: absolute; left: 1365px; top: 50px;`;
const CubeText = styled.text`font: 700 11.5px "Liberation Sans", sans-serif; fill: #a9a9a9; text-anchor: middle;`;
const RingText = styled.text`font: 700 15px "Liberation Sans", sans-serif; fill: #ececec; stroke: #b5b5b5; stroke-width: .9px; text-anchor: middle;`;

function ViewCube() {
  return (
    <CubeBox>
      <svg width="150" height="115" viewBox="1800 220 150 115">
        <defs><filter id="soft" x="-50%" y="-50%" width="200%" height="200%"><feGaussianBlur stdDeviation="4" /></filter></defs>
        <path fillRule="evenodd" d="M1807 289a65 40 0 1 0 130 0a65 40 0 1 0 -130 0ZM1823 288a50 30 0 1 0 100 0a50 30 0 1 0 -100 0Z" fill="#f2f2f2" stroke="#cacaca" />
        <path d="M1846 280L1862 303L1910 290L1900 265Z" fill="#aaa" filter="url(#soft)" />
        <g stroke="#bdbdbd" strokeWidth=".8" strokeLinejoin="round">
          <path d="M1841.400 235L1883.600 226.700L1905.600 247.700L1858.800 257.300Z" fill="#f0f0f0" />
          <path d="M1841.400 235L1858.800 257.300L1859.700 299.300L1843.700 279.300Z" fill="#dddddd" />
          <path d="M1858.800 257.300L1905.600 247.700L1903.300 288L1859.700 299.300Z" fill="#e9e9e9" />
        </g>
        <CubeText transform="translate(1882.500 277.500) skewY(-9) scale(.88 1.150)">BACK</CubeText>
        <CubeText transform="translate(1872 238) rotate(170) scale(.85 .75)">TOP</CubeText>
        <CubeText transform="translate(1850.500 270) skewY(50) scale(.38 .8)">RIGHT</CubeText>
        <RingText transform="translate(1924 276.500) rotate(-28) scale(1.150 .9)">W</RingText>
        <RingText transform="translate(1899 326) rotate(18) scale(1.500 1.150)">N</RingText>
        <RingText transform="translate(1815 304) rotate(12) scale(1.400 1)">E</RingText>
      </svg>
    </CubeBox>
  );
}

const NavBar = styled.div`
  position: absolute; left: 1495px; top: 173px; width: 32px; height: 109px; border: 1px solid #c8c8c8; border-radius: 3px;
  background: #f5f5f5; display: flex; flex-direction: column; align-items: center; padding-top: 2px;
`;
const NavDot = styled.i<{ $mt?: number }>`width: 8px; height: 8px; border-radius: 50%; background: #ddd; border: 2px solid #b3b3b3; align-self: flex-end; margin: ${p => p.$mt ?? 0}px 2px 0 0; flex: none;`;
const NavWheel = styled.svg`margin-top: 5px; flex: none;`;
const NavRule = styled.i`width: 28px; height: 1px; background: #d0d0d0; margin: 0 0 4px; flex: none;`;
const Watermark = styled.div`
  position: absolute; left: 1231px; top: 1088px; color: #bcbcbc; font: 13.8px/20px ${UI};
  strong { display: block; font-weight: 400; font-size: 19px; line-height: 26px; }
`;

/* ---------- Speckle window ---------- */
const Win = styled.section`
  position: absolute; left: 838px; top: 47px; width: 494px; height: 794px; background: #fafafa;
  border: 1px solid #6d6d6d; box-shadow: 1px 3px 10px rgba(0, 0, 0, .32); font-family: Roboto, sans-serif;
  display: flex; flex-direction: column;
`;
const WinTitle = styled.header`height: 27px; background: #fff; display: flex; align-items: center; padding: 0 18px 0 7px; font: 11.5px ${UI}; letter-spacing: -.15px; color: #222; gap: 4px;`;
const WinButtons = styled.div`margin-left: auto; display: flex; gap: 35px; align-items: center;`;
const AppBar = styled.header`
  height: 55px; background: #fff; box-shadow: 0 1px 3px rgba(0, 0, 0, .45); display: flex; align-items: center;
  padding: 0 29px 0 19px; gap: 19px; font-size: 20px; color: #444; z-index: 1;
`;
const Cards = styled.div`display: flex; flex-direction: column; gap: 20px; padding: 20px 17px;`;
const Card = styled.article`
  height: 122px; background: #fff; border-radius: 7px; box-shadow: 0 1px 3px rgba(0, 0, 0, .38); padding: 17px 16px 0 15px;
`;
const CardHead = styled.div`
  display: flex; align-items: center; height: 22px; font-size: 20px; color: #3f3f3f; padding-right: 5px;
  svg { margin-top: 3px; }
  svg:first-of-type { margin-left: auto; } svg + svg { margin-left: 11px; }
`;
const CardRow = styled.div`display: flex; align-items: center; height: 32px; margin-top: 34px; padding-left: 11px;`;
const Branch = styled.div`width: 121px; display: flex; align-items: center; gap: 8px; color: #2a7ae2; font-size: 12.4px;`;
const Action = styled.button<{ $off?: boolean }>`
  width: 120px; height: 32px; border: 0; border-radius: 4px; margin-right: ${p => (p.$off ? 14 : 23)}px;
  padding: 0 ${p => (p.$off ? 13 : 1)}px 0 0; display: flex; align-items: center; justify-content: center; gap: ${p => (p.$off ? 9 : 6)}px;
  background: ${p => (p.$off ? '#c4dffd' : '#247cfb')}; color: ${p => (p.$off ? '#f1f8ff' : '#fff')};
  font: ${p => (p.$off ? '700 13.500px' : '400 12.100px')} Roboto, sans-serif;
  box-shadow: ${p => (p.$off ? '0 1px 2px rgba(0,0,0,.08)' : '0 2px 4px rgba(0,0,0,.35)')};
  svg { flex: none; }
`;
const Fab = styled.button`
  position: absolute; right: 32px; bottom: 32px; width: 60px; height: 60px; border-radius: 50%; border: 0; background: #247cfb;
  box-shadow: 0 4px 8px rgba(0, 0, 0, .4); display: flex; align-items: center; justify-content: center;
`;
const Pointer = styled.svg`position: absolute; left: 1033px; top: 439px;`;

const StreamCard = ({ name }: { name: string }) => (
  <Card>
    <CardHead>
      {name}
      <svg width="17" height="17" viewBox="0 0 24 24" fill="#247cfb"><path d="M14 3v2h3.590l-9.830 9.830 1.410 1.410L19 6.410V10h2V3M19 19H5V5h7V3H5a2 2 0 0 0-2 2v14a2 2 0 0 0 2 2h14a2 2 0 0 0 2-2v-7h-2v7Z" /></svg>
      <svg width="18" height="18" viewBox="0 0 24 24" fill="#247cfb"><path d="M22 8L17.500 3.500V7H10V9H17.500V12.500M2 16L6.500 20.500V17H14V15H6.500V11.500Z" /></svg>
    </CardHead>
    <CardRow>
      <Branch>
        <svg width="15" height="15" viewBox="0 0 15 15" fill="none" stroke="#2a7ae2" strokeWidth="1.400"><circle cx="4" cy="2.800" r="1.600" /><circle cx="4" cy="12.200" r="1.600" /><circle cx="11" cy="3.600" r="1.600" /><path d="M4 4.400V10.600M11 5.200Q11 8.500 7 8.500Q4 8.500 4 10.600" /></svg>
        main
      </Branch>
      <Action>
        <svg width="13" height="14" viewBox="0 0 13 14" fill="none" stroke="#fff" strokeWidth="1.200" strokeLinejoin="round"><path d="M6.500 1L12 4V10L6.500 13L1 10V4ZM1 4L6.500 7L12 4M6.500 7V13" /></svg>
        0 objects
      </Action>
      <Action $off>
        <svg width="28" height="22" viewBox="0 0 26 21" fill="none" stroke="#f1f8ff" strokeWidth="1.200" strokeLinejoin="round"><path fill="#dcecfe" d="M9 5L17 1L25 5L24 14L16 19L8 14Z" /><path d="M9 5L18 8L25 5M18 8L16 19M9 5L24 14M17 1L18 8L8 14" /><path d="M1 19L7 15M0 15L6 11M4 21L9 17" strokeWidth="1.600" /></svg>
        Send
      </Action>
      <svg width="12" height="9" viewBox="0 0 13 9"><path d="M1.500 1.500L6.500 6.800L11.500 1.500" fill="none" stroke="#999" strokeWidth="2" /></svg>
    </CardRow>
  </Card>
);

function SpeckleWindow() {
  return (
    <Win>
      <WinTitle>
        <svg width="14" height="14" viewBox="0 0 14 14"><path d="M0 1L2 0H13L14 1V13L2 14L0 13Z" fill="#1c76f8" /><path d="M0 1L2 2V14L0 13Z" fill="#0b4fc4" /></svg>
        Speckle
        <WinButtons>
          <svg width="11" height="11"><path d="M0 5.500H11" stroke="#111" /></svg>
          <svg width="11" height="11"><rect x=".5" y=".5" width="10" height="10" fill="none" stroke="#111" /></svg>
          <svg width="11" height="11"><path d="M.5 .5L10.500 10.500M10.500 .5L.5 10.500" stroke="#111" strokeWidth="1.200" /></svg>
        </WinButtons>
      </WinTitle>
      <AppBar>
        <svg width="16" height="16" viewBox="0 0 24 24" fill="#757575"><path d="M12 15.500A3.500 3.500 0 0 1 8.500 12 3.500 3.500 0 0 1 12 8.500a3.500 3.500 0 0 1 3.500 3.500 3.500 3.500 0 0 1-3.500 3.500m7.430-2.530c.04-.32.07-.64.07-.97s-.03-.66-.07-1l2.110-1.630c.19-.15.24-.42.12-.64l-2-3.460c-.12-.22-.39-.31-.61-.22l-2.490 1c-.52-.39-1.060-.73-1.690-.98l-.37-2.650A.506.506 0 0 0 14 2h-4c-.25 0-.46.18-.5.420l-.37 2.650c-.63.250-1.170.59-1.690.98l-2.490-1c-.22-.09-.49 0-.61.220l-2 3.460c-.13.220-.07.49.12.640L4.570 11c-.04.340-.07.670-.07 1s.03.650.07.970l-2.110 1.660c-.19.150-.25.420-.12.640l2 3.460c.12.220.39.300.61.220l2.490-1.010c.52.400 1.060.740 1.690.99l.37 2.650c.04.240.25.420.5.420h4c.25 0 .46-.18.5-.420l.37-2.650c.63-.26 1.170-.59 1.690-.99l2.490 1.010c.22.080.49 0 .61-.220l2-3.460c.12-.220.07-.490-.12-.640l-2.110-1.660Z" /></svg>
        REVIT2021 STREAMS
        <Push><svg width="16" height="16" viewBox="0 0 24 24" fill="#757575" display="block"><path d="M17.650 6.350A7.958 7.958 0 0 0 12 4a8 8 0 1 0 7.730 10h-2.080A6 6 0 1 1 12 6c1.660 0 3.140.690 4.220 1.780L13 11h7V4l-2.350 2.350Z" /></svg></Push>
      </AppBar>
      <Cards>
        <StreamCard name="Interop - Revit/GH v2 - Project Data" />
        <StreamCard name="Interop - Revit/GH v2 - Building" />
      </Cards>
      <Fab>
        <svg width="26" height="26" viewBox="0 0 26 26"><path d="M2 8H10L12 11H20V24H2Z" fill="#4f9ffc" stroke="#a9d2ff" strokeWidth="1.400" /><path d="M5 19.500H16" stroke="#bfe0ff" strokeWidth="1.500" /><path d="M3 12L11 20" stroke="#2f86fb" strokeWidth="1" /><circle cx="22" cy="5" r="2.800" fill="none" stroke="#e4f1ff" strokeWidth="1.800" /></svg>
      </Fab>
    </Win>
  );
}

/* ---------- control bar and status bar icons ---------- */
const C = ({ children, s = 16 }: { children: React.ReactNode; s?: number }) => <svg width={s} height={s} viewBox="0 0 16 16" fill="none" stroke="#5c6066" strokeWidth="1.200" strokeLinejoin="round">{children}</svg>;
const redX = <path d="M8.500 7.500L14.500 14.500M14.500 7.500L8.500 14.500" stroke="#cf2b22" strokeWidth="2.200" />;
const bulb = <path d="M9 9a2.500 2.500 0 0 1 5 0Q14 11 12.500 13H10.500Q9 11 9 9Z" fill="#bfe0ff" stroke="#3b7fc9" />;
const CTL = [
  <C key={0}><rect x="1" y="2" width="14" height="12" fill="#ddd" /><path d="M1 5L4 2M1 9L8 2M1 13L12 2M4 14L15 3M8 14L15 7M1 8L7 14M1 4L11 14M4 2L15 12M9 2L15 8" strokeWidth=".6" /></C>,
  <C key={1}><path d="M1.500 6L5 2H15V10L12 14H1.500Z" fill="#9cc9f5" stroke="#3a75b8" /><path d="M1.500 6H12V14M12 6L15 2" stroke="#3a75b8" /></C>,
  <C key={2}><circle cx="7" cy="7" r="3.800" fill="#ffd98a" stroke="#d98c2b" /><path d="M7 0v2.500M0 7h2.500M2 2l2 2M12 2l-2 2M2 12l2-2" stroke="#d98c2b" />{redX}</C>,
  <C key={3}><circle cx="7" cy="6" r="4.500" fill="#cfe6fb" stroke="#3a75b8" /><path d="M2 13H9" strokeWidth="2" />{redX}</C>,
  <C key={4}><path d="M2 6H12L10 14H4ZM5 6V3H9V6M2 9L0 6M12 7Q15 6 13 10" fill="#eee" />{bulb}</C>,
  <C key={5}><path d="M3 2V13M0 5H16M0 11H10M12 4V9" stroke="#4a7bb0" strokeWidth="2" />{redX}</C>,
  <C key={6}><path d="M3 2V13M0 5H14M0 11H9" stroke="#4a7bb0" strokeWidth="2" />{bulb}</C>,
  <C key={7}><path d="M1 7L6 1L14 6V13H2Z" fill="#ddd" /><rect x="8" y="8" width="6.500" height="6" fill="#f5f5f5" /></C>,
  <C key={8}><path d="M0 3Q2 9 6 10M14 2Q16 7 11 9" /><circle cx="6" cy="10" r="3" fill="#cfe6fb" /><circle cx="11.500" cy="8.500" r="2.500" fill="#cfe6fb" /></C>,
  <C key={9}><path d="M5.500 6a2.500 2.500 0 0 1 5 0Q10.500 8.500 9.500 10V13H6.500V10Q5.500 8.500 5.500 6Z" fill="#cfe6fb" stroke="#3b7fc9" /></C>,
  <C key={10}><rect x="1.500" y="3.500" width="13" height="10" fill="#eee" strokeWidth="2" strokeDasharray="2 1" /><circle cx="10" cy="10" r="2.500" fill="#bbb" /></C>,
  <C key={11}><path d="M1 6L5 2H12V10L9 14H1Z" fill="#ccc" /><path d="M2 9H9M5 4V13" stroke="#c0392b" /><circle cx="12" cy="6" r="3.500" fill="#ffc968" stroke="#c98a2a" /></C>,
  <C key={12}><path d="M3 6L6 2H13V10L11 14H3Z" fill="#bbb" /><path d="M3 6H11V14M.5 5V12M15.500 3V10" /></C>,
  <C key={13}><path d="M2 3V13M0 4H16M15 1V8" /><rect x="8" y="8" width="7" height="6" fill="#888" /></C>,
];

const StatusBar = styled.footer`
  height: 25px; flex: none; background: #cbcbcb; display: flex; align-items: center; color: #222; font-size: 11.350px; padding-bottom: 1px;
`;
const StatusText = styled.div`width: 1048px; padding-left: 1px;`;
const StatusCombo = styled.div<{ $ml: number }>`
  width: 203px; height: 17px; margin: -3px 0 0 ${p => p.$ml}px; background: #fff; color: #8b8b8b; display: flex; align-items: center; justify-content: space-between;
  padding: 0 2px 0 1px; font-size: 11.800px;
`;
const Gap = styled.i<{ $w: number }>`width: ${p => p.$w}px; flex: none;`;
const Count = styled.span<{ $w: number }>`width: ${p => p.$w}px; font-size: 11.500px; padding-top: 3px; text-align: center; letter-spacing: -.4px;`;
const StatusTools = styled.div`margin-left: 217px; display: flex; gap: 6px; align-items: center; svg:last-child { margin-left: -2px; }`;
const cursorSmall = <path d="M9 6V14L11 12.500L12.500 15.500L14 15L12.500 12H15Z" fill="#f6f6f6" stroke="#555" strokeWidth=".8" />;

function Status() {
  return (
    <StatusBar>
      <StatusText>Click to select, TAB for alternates, CTRL adds, SHIFT unselects.</StatusText>
      <C><path d="M5 1.500H11V6H5Z" fill="#e9f5e4" stroke="#3a8a34" strokeWidth="1.500" /><path d="M1 8L3 6H8V13L6 15H1Z" fill="#9cc9f5" stroke="#2f6fb8" /><path d="M13 7V15M11 5Q13 8 15 5" strokeWidth="1.600" /></C>
      <StatusCombo $ml={5}><span /><Chev c="#aaa" s={10} /></StatusCombo>
      <Gap $w={4} />
      <C><path d="M5 1H15V5H11L5 12M11 5L12 8" stroke="#aaa" /><path d="M1 15L5 8L9 15Z" fill="#a4a4a4" stroke="none" /></C>
      <Count $w={20}>:0</Count>
      <Gap $w={2} />
      <C><rect x="1" y="1" width="14" height="14" rx="1.500" fill="#e8e8e8" stroke="#55606e" strokeWidth="1.400" /><path d="M1 3H15" stroke="#55606e" strokeWidth="2.500" /><path d="M4 6V12M4 8.500H6M4 12H6M7 6.500H13M7 9H13M7 12H13" stroke="#333" /></C>
      <Gap $w={5} />
      <C><rect x="5" y="1" width="10" height="14" fill="#9d9d9d" stroke="none" /><path d="M0 11L4 8V10H8V6L13 10L8 14V12H0Z" fill="#bfbfbf" stroke="#999" strokeWidth=".6" /></C>
      <StatusCombo $ml={6}>Main Model<Chev c="#aaa" s={10} /></StatusCombo>
      <StatusTools>
        <C><path d="M1 6Q4 0 7 4Q11 0 15 5Q13 9 8 9Q4 10 1 6Z" fill="#eebd72" stroke="#c98a3a" /><path d="M5 6h2M9 6h2" stroke="#c0392b" />{cursorSmall}</C>
        <C><path d="M1 8L7 3V8ZM1 12H9" fill="#9cc9f5" stroke="#2f6fb8" /><path d="M9 1L14 6M14 1L9 6" stroke="#cf2b22" strokeWidth="2" />{cursorSmall}</C>
        <C><path d="M2 2H9V4L8 7L11 10H1L3 7L2 4Z" fill="#e8763a" stroke="#a33c22" /><path d="M6 10V15" />{cursorSmall}</C>
        <C><path d="M1 4L6 2V12L1 14Z" fill="#9cc9f5" stroke="#2f6fb8" /><path d="M9 1L14 6M14 1L9 6" stroke="#cf2b22" strokeWidth="2" />{cursorSmall}</C>
        <C><path d="M5 1V9M1 5H9M4 2.500L5 1L6 2.500M4 7.500L5 9L6 7.500" stroke="#333" strokeWidth="1.800" />{cursorSmall}</C>
        <C><circle cx="8" cy="8" r="5.200" stroke="#999" strokeWidth="3" strokeDasharray="2.400 1.700" /></C>
        <C><path d="M0 1H16L10 8V15L6 13V8Z" fill="#aeb4bb" stroke="#555b63" /></C>
      </StatusTools>
      <Count $w={12}>:0</Count>
    </StatusBar>
  );
}

export default function App() {
  return (
    <Page>
      <GlobalStyle />
      <Ribbon />
      <Main>
        <Left>
          <Properties />
          <Browser />
        </Left>
        <ViewColumn>
          <ViewTabs>
            <ViewTab><House s={16} dim /><span>{'{3D}'}</span></ViewTab>
            <ViewTab $active><House s={16} /><span>{'{3D}'}</span><CloseX s={11} /></ViewTab>
            <TabsMenu><Tri $s={3.500} /></TabsMenu>
          </ViewTabs>
          <CanvasRow>
            <Canvas>
              <Tower />
              <ViewCube />
              <NavBar>
                <NavDot />
                <NavWheel width="24" height="24" viewBox="0 0 24 24" fill="#e6e6e6" stroke="#b3b3b3" strokeWidth="1.400"><path d="M12 1H21Q23 1 23 3V12A11 11 0 1 1 12 1Z" /><circle cx="12" cy="12" r="7.500" fill="#f6f6f6" /><circle cx="12" cy="12" r="4.500" fill="#fff" /><path d="M6.500 17.500L4 20M17.500 17.500L20 20" /></NavWheel>
                <svg width="8" height="14" viewBox="0 0 8 14"><path d="M1.500 8H6.500L4 11Z" fill="#999" /></svg>
                <NavRule />
                <svg width="20" height="20" viewBox="0 0 20 20"><path d="M2 2H13V15H2Z" fill="#b8b8b8" /><path d="M2 4H13" stroke="#d6b68e" /><circle cx="12" cy="12" r="4" fill="#fff" stroke="#999" strokeWidth="1.400" /><path d="M15 15L18 19" stroke="#999" strokeWidth="1.800" /></svg>
                <svg width="8" height="14" viewBox="0 0 8 14"><path d="M1.500 8H6.500L4 11Z" fill="#999" /></svg>
                <NavDot $mt={4} />
              </NavBar>
              <Watermark><strong>Activate Windows</strong>Go to Settings to activate Windows.</Watermark>
              <SpeckleWindow />
              <Pointer width="28" height="42" viewBox="0 0 28 42"><path d="M1.500 1.500V34L9 26.500L14 38.500L18.500 36.500L13.500 25.500H25Z" fill="#fff" stroke="#111" strokeWidth="1.200" /></Pointer>
            </Canvas>
            <VScroll><Chev d="up" /><VThumb /><Chev /></VScroll>
          </CanvasRow>
          <ControlBar>
            <Scale>1 : 100</Scale>
            <CtlIcons>{CTL}</CtlIcons>
            <Chev d="left" />
            <HThumb />
            <HArrow><Chev d="right" s={10} /></HArrow>
            <Grip />
          </ControlBar>
        </ViewColumn>
      </Main>
      <Status />
    </Page>
  );
}
